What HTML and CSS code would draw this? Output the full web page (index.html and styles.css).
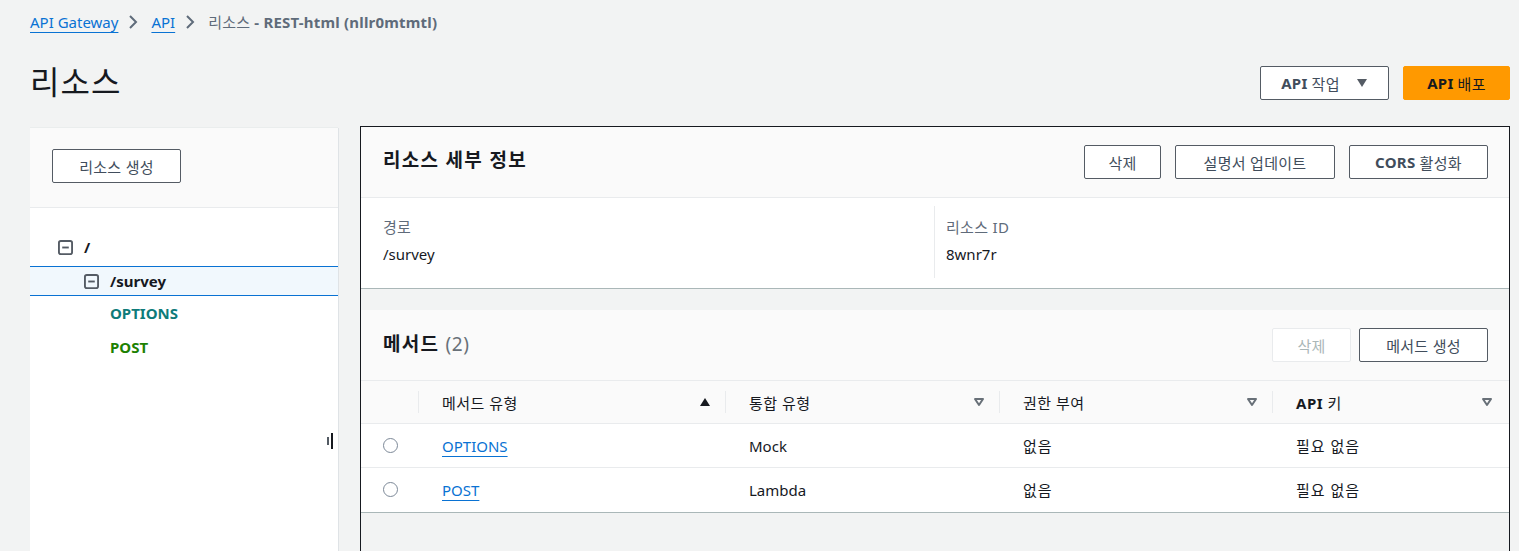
FILE: index.html
```html
<!DOCTYPE html>
<html lang="ko">
<head>
<meta charset="utf-8">
<title>리소스</title>
<link rel="stylesheet" href="styles.css">
</head>
<body>
<div class="page">
  <nav class="crumbs">
    <a class="link" href="#">API Gateway</a>
    <svg class="chev" viewBox="0 0 16 16"><path d="M5 2l6 6-6 6" fill="none" stroke="#5f6b7a" stroke-width="2"/></svg>
    <a class="link" href="#">API</a>
    <svg class="chev" viewBox="0 0 16 16"><path d="M5 2l6 6-6 6" fill="none" stroke="#5f6b7a" stroke-width="2"/></svg>
    <span class="current">리소스 <b>- REST-html (nllr0mtmtl)</b></span>
  </nav>

  <header class="head">
    <h1 class="title">리소스</h1>
    <div class="actions">
      <button class="btn btn-drop"><b>API</b> 작업 <svg class="caret" viewBox="0 0 12 12"><path d="M1 2h10L6 10z" fill="#545b64"/></svg></button>
      <button class="btn btn-primary"><b>API</b> 배포</button>
    </div>
  </header>

  <div class="main">
    <aside class="side">
      <div class="side-head">
        <button class="btn btn-create">리소스 생성</button>
      </div>
      <ul class="tree">
        <li class="node lvl0">
          <svg class="minus" viewBox="0 0 16 16"><rect x="1" y="1" width="14" height="14" rx="2" fill="none" stroke="#545b64" stroke-width="2"/><path d="M4.5 8h7" stroke="#545b64" stroke-width="2"/></svg>
          <span class="path">/</span>
        </li>
        <li class="node lvl1 selected">
          <svg class="minus" viewBox="0 0 16 16"><rect x="1" y="1" width="14" height="14" rx="2" fill="none" stroke="#545b64" stroke-width="2"/><path d="M4.5 8h7" stroke="#545b64" stroke-width="2"/></svg>
          <span class="path">/survey</span>
        </li>
        <li class="node lvl2"><span class="m-options">OPTIONS</span></li>
        <li class="node lvl2"><span class="m-post">POST</span></li>
      </ul>
      <div class="resizer"><span class="r1"></span><span class="r2"></span></div>
    </aside>

    <section class="content">
      <div class="card">
        <div class="card-head">
          <h2 class="card-title">리소스 세부 정보</h2>
          <div class="card-actions">
            <button class="btn btn-sm">삭제</button>
            <button class="btn btn-sm">설명서 업데이트</button>
            <button class="btn btn-sm"><b>CORS</b> 활성화</button>
          </div>
        </div>
        <div class="details">
          <div class="detail">
            <div class="label">경로</div>
            <div class="value">/survey</div>
          </div>
          <div class="detail detail-sep">
            <div class="label">리소스 ID</div>
            <div class="value">8wnr7r</div>
          </div>
        </div>
      </div>

      <div class="card card-methods">
        <div class="card-head">
          <h2 class="card-title">메서드 <span class="count">(2)</span></h2>
          <div class="card-actions tight">
            <button class="btn btn-sm btn-disabled">삭제</button>
            <button class="btn btn-sm btn-wide">메서드 생성</button>
          </div>
        </div>
        <table class="table">
          <thead>
            <tr>
              <th class="c0"></th>
              <th class="c1"><div class="th"><span>메서드 유형</span><svg class="sort" viewBox="0 0 12 12"><path d="M1 10h10L6 2z" fill="#16191f"/></svg></div></th>
              <th class="c2"><div class="th"><span>통합 유형</span><svg class="sort" viewBox="0 0 12 12"><path d="M2 3h8L6 9z" fill="none" stroke="#687078" stroke-width="2" stroke-linejoin="round"/></svg></div></th>
              <th class="c3"><div class="th"><span>권한 부여</span><svg class="sort" viewBox="0 0 12 12"><path d="M2 3h8L6 9z" fill="none" stroke="#687078" stroke-width="2" stroke-linejoin="round"/></svg></div></th>
              <th class="c4"><div class="th"><span><b>API</b> 키</span><svg class="sort" viewBox="0 0 12 12"><path d="M2 3h8L6 9z" fill="none" stroke="#687078" stroke-width="2" stroke-linejoin="round"/></svg></div></th>
            </tr>
          </thead>
          <tbody>
            <tr>
              <td class="c0"><span class="radio"></span></td>
              <td class="c1"><a class="link" href="#">OPTIONS</a></td>
              <td class="c2">Mock</td>
              <td class="c3">없음</td>
              <td class="c4">필요 없음</td>
            </tr>
            <tr>
              <td class="c0"><span class="radio"></span></td>
              <td class="c1"><a class="link" href="#">POST</a></td>
              <td class="c2">Lambda</td>
              <td class="c3">없음</td>
              <td class="c4">필요 없음</td>
            </tr>
          </tbody>
        </table>
      </div>
    </section>
  </div>
</div>
</body>
</html>
```

FILE: styles.css
```css
* { box-sizing: border-box; }
html, body { margin: 0; padding: 0; }
body {
  background: #f2f3f3;
  font-family: "Noto Sans", "Noto Sans CJK KR", sans-serif;
  font-size: 15px;
  color: #16191f;
  overflow: hidden;
  height: 551px;
}
b { font-weight: 700; }
.page { padding: 12px 9px 0 30px; }

.crumbs { display: flex; align-items: center; height: 20px; line-height: 20px; }
.link { color: #0972d3; text-decoration: underline; text-underline-offset: 4px; text-decoration-thickness: 1px; }
.chev { width: 16px; height: 16px; margin: 0 10px 0 7px; }
.current { color: #5f6b7a; letter-spacing: 0.2px; }
.current b { font-weight: 700; }

.head { display: flex; align-items: center; justify-content: space-between; margin-top: 34px; height: 34px; }
.title { margin: 0 0 2px; font-size: 32px; font-weight: 400; line-height: 34px; color: #16191f; letter-spacing: 1px; }
.actions { display: flex; gap: 14px; }

.btn {
  font-family: inherit;
  font-size: 15px;
  height: 34px;
  border: 1px solid #545b64;
  border-radius: 2px;
  background: #fff;
  color: #414d5c;
  padding: 0 16px;
  display: inline-flex;
  align-items: center;
  justify-content: center;
  gap: 4px;
  cursor: pointer;
  letter-spacing: 0.3px;
  white-space: nowrap;
}
.btn b { font-weight: 700; }
.btn-drop { width: 129px; }
.caret { width: 12px; height: 12px; margin-left: 12px; }
.btn-primary { background: #ff9900; border-color: #ff9900; color: #16191f; width: 107px; }

.main { display: flex; align-items: flex-start; gap: 22px; margin-top: 26px; }

.side {
  position: relative;
  width: 308px;
  height: 430px;
  margin-top: 2px;
  background: #fff;
  box-shadow: 1px 0 0 #dfe3e6, 0 -1px 0 #eaeded;
}
.side-head {
  height: 80px;
  background: #fafafa;
  border-bottom: 1px solid #e9ebed;
  padding: 21px 22px;
}
.btn-create { width: 129px; }
.tree { list-style: none; margin: 0; padding: 22px 0 0; }
.node { display: flex; align-items: center; height: 34px; font-weight: 700; }
.node.lvl0 { padding-left: 28px; }
.node.lvl1 { padding-left: 54px; height: 30px; margin: 2px 0 0; border-top: 1px solid #0972d3; border-bottom: 1px solid #0972d3; background: #f1f8fd; }
.node.lvl2 { padding-left: 80px; }
.minus { width: 15px; height: 15px; margin-right: 11px; }
.path { color: #16191f; }
.m-options { color: #0e7b7a; }
.m-post { color: #1d8102; }
.resizer { position: absolute; left: 297px; top: 305px; width: 8px; height: 16px; }
.r1 { position: absolute; left: 0; top: 4px; width: 2px; height: 8px; background: #545b64; }
.r2 { position: absolute; left: 4px; top: 0; width: 2px; height: 16px; background: #16191f; }

.content {
  flex: 1;
  height: 440px;
  border: 1px solid #16191f;
  border-bottom: none;
  background: #f2f3f3;
}
.card { background: #fff; box-shadow: 0 1px 0 #aab7b8; }
.card-methods { margin-top: 22px; }
.card-head {
  display: flex;
  align-items: center;
  justify-content: space-between;
  height: 71px;
  padding: 0 21px 0 22px;
  background: #fafafa;
  border-bottom: 1px solid #e9ebed;
}
.card-methods .card-head { height: 70px; border-bottom: none; }
.card-title { margin: 0 0 7px; font-size: 19px; font-weight: 700; color: #16191f; letter-spacing: 1.3px; }
.card-methods .card-title { margin-bottom: 4px; }
.count { font-weight: 400; color: #687078; letter-spacing: 0.5px; }
.card-actions { display: flex; gap: 14px; }
.card-actions.tight { gap: 8px; }
.card-actions .btn-sm:nth-child(1) { width: 77px; }
.card-actions .btn-sm:nth-child(2) { width: 160px; }
.card-actions .btn-sm:nth-child(3) { width: 139px; }
.card-actions.tight .btn-disabled { width: 79px; border-color: #e9ebed; color: #aab7b8; }
.card-actions.tight .btn-wide { width: 129px; }

.details { display: flex; height: 90px; padding: 8px 0 10px; }
.detail { flex: 0 0 573px; padding: 11px 22px 10px; }
.detail-sep { flex: 1; border-left: 1px solid #e9ebed; padding-left: 11px; }
.label { color: #5f6b7a; line-height: 20px; letter-spacing: 0.3px; }
.value { color: #16191f; line-height: 20px; margin-top: 7px; }

.table { width: 100%; border-collapse: collapse; table-layout: fixed; }
.table th { height: 43px; background: #fafafa; border-top: 1px solid #e9ebed; border-bottom: 1px solid #e9ebed; font-weight: 400; color: #16191f; text-align: left; padding: 0; letter-spacing: 0.5px; }
.table th + th .th { border-left: 1px solid #e9ebed; }
.th { display: flex; align-items: center; justify-content: space-between; height: 22px; padding: 0 14px 0 23px; }
.c4 .th { padding-right: 16px; }
.sort { width: 12px; height: 12px; }
.table td { height: 44px; border-bottom: 1px solid #e9ebed; padding: 0 0 0 24px; color: #16191f; }
.table td.c3, .table td.c4 { letter-spacing: 1px; }
.table td.c0 { padding-left: 22px; }
.table tr:last-child td { border-bottom: none; }
.c0 { width: 57px; }
.c1 { width: 307px; }
.c2 { width: 274px; }
.c3 { width: 273px; }
.radio { display: block; width: 15px; height: 15px; border-radius: 50%; border: 1.5px solid #7d8998; background: #fff; }
```
